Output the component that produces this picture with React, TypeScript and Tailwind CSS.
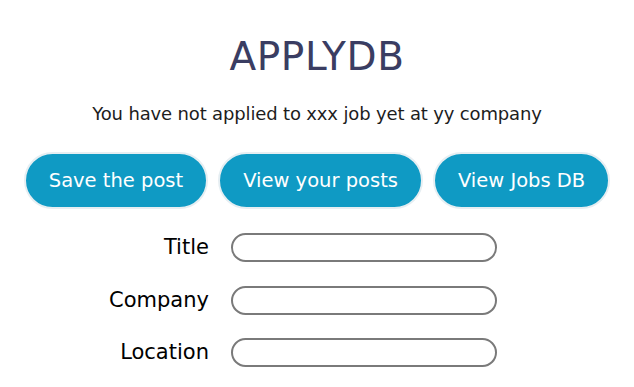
import React from "react";

const fields = ["Title", "Company", "Location"];
const buttons = ["Save the post", "View your posts", "View Jobs DB"];

export default function App() {
  return (
    <div className="min-h-screen bg-white font-['DejaVu_Sans',sans-serif] flex flex-col items-center pt-[35px]">
      <h1 className="text-[39px] leading-[44px] text-[#3a3d62] tracking-[0.6px]">APPLYDB</h1>
      <p className="mt-[23px] text-[18px] leading-[24px] text-[#1d1d1d] tracking-[-0.15px]">
        You have not applied to xxx job yet at yy company
      </p>
      <div className="mt-[26px] flex gap-[10px]">
        {buttons.map((b) => (
          <button
            key={b}
            className="h-[57px] px-[23px] rounded-full bg-[#0f9ac4] border-2 border-[#e6eef2] text-white text-[19.5px]"
          >
            {b}
          </button>
        ))}
      </div>
      <div className="mt-[24px] grid grid-cols-[auto_266px] gap-x-[22px] gap-y-[23.5px] items-center ml-[-28px]">
        {fields.map((f) => (
          <React.Fragment key={f}>
            <label className="text-right text-[21px] leading-[29px] text-black">{f}</label>
            <input className="h-[29px] rounded-full border-2 border-[#7a7a7a] bg-white outline-none" />
          </React.Fragment>
        ))}
      </div>
    </div>
  );
}
